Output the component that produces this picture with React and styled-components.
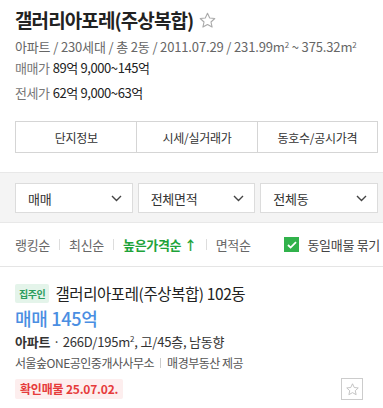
import React from 'react';
import styled, {createGlobalStyle} from 'styled-components';

const Global = createGlobalStyle`
    html, body {
        margin: 0;
        padding: 0;
        background: #fff;
    }
    body {
        font-family: "Noto Sans CJK KR", "Noto Sans", sans-serif;
        color: #222;
    }
    * { box-sizing: border-box; }
`

const Page = styled.div`
    width: 383px;
    height: 408px;
    overflow: hidden;
`

const Summary = styled.div`
    padding: 6px 15px 0 15px;
`

const Title = styled.h2`
    display: flex;
    align-items: center;
    gap: 5px;
    margin: 0;
    font-size: 19px;
    font-weight: 700;
    letter-spacing: -0.9px;
    line-height: 28px;
    color: #222;
`

const Info = styled.div`
    margin-top: 1px;
    font-size: 13px;
    letter-spacing: -0.15px;
    color: #666;
    line-height: 20px;
    sup { font-size: 8px; vertical-align: 4px; }
`

const PriceLine = styled.div`
    margin-top: ${p => p.$top}px;
    font-size: 13px;
    letter-spacing: -0.4px;
    line-height: 20px;
    color: #222;
    span { color: #777; margin-right: 3px; }
`

const Tabs = styled.div`
    display: grid;
    grid-template-columns: repeat(3, 1fr);
    margin: 18px 5px 0 15px;
    border: 1px solid #d5d5d5;
`

const Tab = styled.div`
    height: 30px;
    display: flex;
    align-items: center;
    justify-content: center;
    font-size: 12px;
    color: #333;
    letter-spacing: -0.3px;
    border-left: ${p => p.$first ? 'none' : '1px solid #d5d5d5'};
`

const FilterBand = styled.div`
    margin-top: 19px;
    background: #f4f4f4;
    border-top: 1px solid #e8e8e8;
    border-bottom: 1px solid #e8e8e8;
    padding: 10px 5px 9px 15px;
    display: grid;
    grid-template-columns: repeat(3, 1fr);
    gap: 5px;
`

const Select = styled.div`
    height: 30px;
    background: #fff;
    border: 1px solid #dcdcdc;
    display: flex;
    align-items: center;
    justify-content: space-between;
    padding: 0 10px 0 12px;
    font-size: 13px;
    color: #333;
    letter-spacing: -0.3px;
`

const SortRow = styled.div`
    height: 44px;
    display: flex;
    align-items: center;
    padding: 0 3px 0 15px;
    border-bottom: 1px solid #e5e5e5;
    font-size: 13px;
    letter-spacing: -0.3px;
`

const SortItem = styled.span`
    color: ${p => p.$active ? '#1ea33a' : '#666'};
    font-weight: ${p => p.$active ? 700 : 400};
    display: flex;
    align-items: center;
`

const Sep = styled.span`
    width: 1px;
    height: 11px;
    background: #ddd;
    margin: 0 9px;
`

const Check = styled.label`
    margin-left: auto;
    display: flex;
    align-items: center;
    gap: 8px;
    color: #444;
    font-size: 13px;
`

const Box = styled.span`
    width: 15px;
    height: 15px;
    background: #31b24b;
    display: flex;
    align-items: center;
    justify-content: center;
`

const Listing = styled.div`
    padding: 16px 15px 0 15px;
`

const ListTitle = styled.div`
    display: flex;
    align-items: center;
    gap: 6px;
    font-size: 15.5px;
    letter-spacing: -0.4px;
    color: #222;
    line-height: 20px;
`

const Tag = styled.span`
    background: #e4f4ea;
    color: #2c9d5e;
    font-size: 10px;
    font-weight: 700;
    padding: 0 4px;
    border-radius: 2px;
    line-height: 19px;
`

const Price = styled.div`
    margin-top: 4px;
    font-size: 18px;
    font-weight: 500;
    color: #4a8ee2;
    letter-spacing: -0.3px;
    line-height: 22px;
`

const Spec = styled.div`
    margin-top: 0;
    font-size: 13px;
    letter-spacing: -0.2px;
    color: #333;
    line-height: 20px;
    b { font-weight: 700; }
    sup { font-size: 8px; }
`

const Agent = styled.div`
    margin-top: 2px;
    font-size: 12px;
    letter-spacing: -0.5px;
    color: #555;
    line-height: 18px;
    display: flex;
    align-items: center;
`

const SmallSep = styled.span`
    width: 1px;
    height: 10px;
    background: #ccc;
    margin: 0 6px;
`

const Bottom = styled.div`
    margin-top: 6px;
    display: flex;
    align-items: center;
    justify-content: space-between;
    padding-right: 5px;
`

const Confirm = styled.span`
    background: #fdeeee;
    color: #e63b3b;
    font-size: 12px;
    font-weight: 700;
    letter-spacing: -0.2px;
    padding: 0 5px;
    line-height: 20px;
    border-radius: 2px;
`

const StarBtn = styled.span`
    width: 22px;
    height: 22px;
    border: 1px solid #ccc;
    display: flex;
    align-items: center;
    justify-content: center;
`

const Star = ({size = 16, color = '#aaa'}) => (
    <svg width={size} height={size} viewBox="0 0 24 24" fill="none" stroke={color} strokeWidth="1.4" strokeLinejoin="round">
        <path d="M12 2.8l2.8 6 6.4.7-4.8 4.4 1.4 6.4L12 17l-5.8 3.3 1.4-6.4L2.8 9.5l6.4-.7z"/>
    </svg>
)

const Chevron = () => (
    <svg width="11" height="7" viewBox="0 0 11 7" fill="none" stroke="#444" strokeWidth="1.4">
        <path d="M1 1l4.5 4.5L10 1"/>
    </svg>
)

export default function App() {
    return (
        <Page>
            <Global/>
            <Summary>
                <Title>갤러리아포레(주상복합) <Star size={19}/></Title>
                <Info>아파트 / 230세대 / 총 2동 / 2011.07.29 / 231.99m<sup>2</sup> ~ 375.32m<sup>2</sup></Info>
                <PriceLine $top={1}><span>매매가</span>89억 9,000~145억</PriceLine>
                <PriceLine $top={5}><span>전세가</span>62억 9,000~63억</PriceLine>
            </Summary>
            <Tabs>
                <Tab $first>단지정보</Tab>
                <Tab>시세/실거래가</Tab>
                <Tab>동호수/공시가격</Tab>
            </Tabs>
            <FilterBand>
                <Select>매매<Chevron/></Select>
                <Select>전체면적<Chevron/></Select>
                <Select>전체동<Chevron/></Select>
            </FilterBand>
            <SortRow>
                <SortItem>랭킹순</SortItem>
                <Sep/>
                <SortItem>최신순</SortItem>
                <Sep/>
                <SortItem $active>높은가격순&nbsp;↑</SortItem>
                <Sep/>
                <SortItem>면적순</SortItem>
                <Check>
                    <Box>
                        <svg width="10" height="8" viewBox="0 0 10 8" fill="none" stroke="#fff" strokeWidth="1.8">
                            <path d="M1 4l2.6 2.6L9 1.2"/>
                        </svg>
                    </Box>
                    동일매물 묶기
                </Check>
            </SortRow>
            <Listing>
                <ListTitle><Tag>집주인</Tag>갤러리아포레(주상복합) 102동</ListTitle>
                <Price>매매 145억</Price>
                <Spec><b>아파트</b> · 266D/195m<sup>2</sup>, 고/45층, 남동향</Spec>
                <Agent>서울숲ONE공인중개사사무소<SmallSep/>매경부동산 제공</Agent>
                <Bottom>
                    <Confirm>확인매물 25.07.02.</Confirm>
                    <StarBtn><Star size={15} color="#bbb"/></StarBtn>
                </Bottom>
            </Listing>
        </Page>
    );
}
